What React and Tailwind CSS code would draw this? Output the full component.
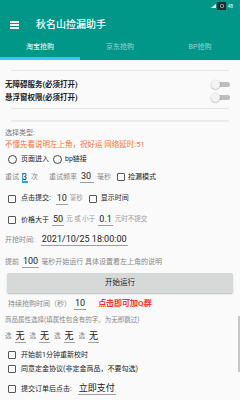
import React from "react";

const font = { fontFamily: 'Roboto, "Noto Sans CJK SC", sans-serif' };

function Cb() {
  return <span className="inline-block w-[8px] h-[8px] border border-[#555] rounded-[1px] shrink-0" />;
}
function Radio() {
  return <span className="inline-block w-[9px] h-[9px] border border-[#444] rounded-full shrink-0" />;
}
function Val({ children, cls = "" }) {
  return (
    <span className={"inline-block text-[9px] text-[#222] leading-[11px] border-b border-[#9e9e9e] px-[1px] " + cls}>
      {children}
    </span>
  );
}
function Switch() {
  return (
    <span className="relative inline-flex items-center w-[19px] h-[10px]">
      <span className="absolute left-[4px] right-0 h-[5px] rounded-full bg-[#bdbdbd]" />
      <span className="absolute left-0 w-[9px] h-[9px] rounded-full bg-[#f3f3f3] shadow-[0_0.5px_1.5px_rgba(0,0,0,0.35)]" />
    </span>
  );
}

export default function App() {
  return (
    <div className="relative w-[240px] h-[400px] overflow-hidden bg-[#fafafa]" style={font}>
      <div className="flex flex-col">
        {/* header */}
        <div className="bg-[#009688] flex flex-col">
          <div className="h-[12px] flex items-center justify-end pr-[7px] gap-[1px]">
            <span className="w-0 h-0 border-l-[5px] border-l-transparent border-b-[4px] border-b-white" />
            <span className="w-[9px] h-[8px] bg-[#1e2b2a] flex items-center justify-center">
              <span className="w-[4px] h-[4px] border border-[#8a9a98] rounded-[1px]" />
            </span>
            <span className="text-[5px] text-white leading-none">48</span>
          </div>
          <div className="h-[26px] flex items-center">
            <div className="ml-[10px] w-[9px] flex flex-col gap-[1.5px]">
              <span className="h-[1.5px] bg-white" />
              <span className="h-[1.5px] bg-white" />
              <span className="h-[1.5px] bg-white" />
            </div>
            <span className="ml-[17px] text-white text-[10px] font-medium leading-none">秋名山捡漏助手</span>
          </div>
          <div className="h-[22px] flex">
            <div className="flex-1 flex flex-col">
              <div className="flex-1 flex items-center justify-center text-[7px] text-white">淘宝抢购</div>
              <div className="h-[3px] bg-[#40c4ff]" />
            </div>
            <div className="flex-1 flex items-center justify-center text-[7px] text-white/60 pb-[3px]">京东抢购</div>
            <div className="flex-1 flex items-center justify-center text-[7px] text-white/60 pb-[3px]">BP抢购</div>
          </div>
        </div>

        {/* content */}
        <div className="mx-[11px] mt-[10px] h-px bg-[#e6e6e6]" />
        <div className="mt-[7px] flex flex-col">
          <div className="h-[13px] flex items-center justify-between pl-[5px] pr-[10px]">
            <span className="text-[7.5px] font-bold text-[#222]">无障碍服务(必须打开)</span>
            <Switch />
          </div>
          <div className="h-[13px] flex items-center justify-between pl-[5px] pr-[10px]">
            <span className="text-[7.5px] font-bold text-[#222]">悬浮窗权限(必须打开)</span>
            <Switch />
          </div>
        </div>
        <div className="mx-[11px] mt-[4px] h-px bg-[#e6e6e6]" />
        <div className="mx-[11px] mt-[11px] h-[2px] bg-[#ececec]" />

        <div className="mt-[5px] h-[12px] flex items-center px-[5px] text-[7px] text-[#777]">选择类型:</div>
        <div className="h-[11px] flex items-center px-[5px] text-[7.5px] text-[#ff6e40]">不懂先看说明左上角，祝好运 网络延时:51</div>

        <div className="h-[18px] flex items-center pl-[8px] text-[7px] text-[#222]">
          <Radio />
          <span className="ml-[4px]">页面进入</span>
          <span className="ml-[4px] flex"><Radio /></span>
          <span className="ml-[3px]">bp链接</span>
        </div>

        <div className="h-[18px] flex items-center pl-[5px] text-[7px] text-[#888]">
          <span>重试</span>
          <span className="relative ml-[3px] inline-block w-[6px] h-[11px] border-b-2 border-[#29a3e8]">
            <span className="absolute left-0 top-0 text-[9px] leading-[11px] text-[#222]">3</span>
            <span className="absolute left-0 top-[1px] w-px h-[9px] bg-[#29a3e8]" />
          </span>
          <span className="ml-[3px]">次</span>
          <span className="ml-[11px]">重试频率</span>
          <Val cls="ml-[3px] w-[14px]">30</Val>
          <span className="ml-[3px]">毫秒</span>
          <span className="ml-[6px] flex"><Cb /></span>
          <span className="ml-[3px] text-[#222]">捡漏模式</span>
        </div>

        <div className="h-[25px] flex items-center pl-[8px] text-[7px] text-[#222]">
          <Cb />
          <span className="ml-[5px]">点击提交:</span>
          <Val cls="ml-[5px]">10</Val>
          <span className="ml-[2px] text-[6.5px] text-[#999]">毫秒</span>
          <span className="ml-[6px] flex"><Cb /></span>
          <span className="ml-[4px]">显示时间</span>
        </div>

        <div className="h-[18px] flex items-center pl-[8px] text-[7px] text-[#222]">
          <Cb />
          <span className="ml-[5px]">价格大于</span>
          <Val cls="ml-[3px]">50</Val>
          <span className="ml-[2px] text-[6.5px] text-[#999]">元 或 小于</span>
          <Val cls="ml-[3px]">0.1</Val>
          <span className="ml-[2px] text-[6.5px] text-[#999]">元时不提交</span>
        </div>

        <div className="h-[22px] flex items-center pl-[5px] text-[7px] text-[#888]">
          <span>开抢时间:</span>
          <Val cls="ml-[6px]">2021/10/25 18:00:00</Val>
        </div>

        <div className="h-[22px] flex items-center pl-[5px] text-[7px] text-[#888]">
          <span>提前</span>
          <Val cls="ml-[3px]">100</Val>
          <span className="ml-[2px]">毫秒开始运行 具体设置看左上角的说明</span>
        </div>

        <div className="mx-[7px] h-[20px] rounded-[2px] bg-[#d7d8d8] shadow-[0_1px_1.5px_rgba(0,0,0,0.25)] flex items-center justify-center text-[7.5px] text-[#222]">
          开始运行
        </div>

        <div className="h-[22px] flex items-center pl-[8px] text-[7px] text-[#888]">
          <span>持续抢购时间（秒）</span>
          <Val cls="ml-[3px]">10</Val>
          <span className="ml-[12px] text-[8px] font-bold text-[#ff3030]">点击即可加Q群</span>
        </div>

        <div className="h-[11px] flex items-center pl-[5px] text-[6.5px] text-[#888]">商品属性选择(填属性包含有的字。为无即跳过)</div>

        <div className="h-[22px] flex items-center pl-[5px] text-[6.5px] text-[#888]">
          <span>选</span>
          <Val cls="ml-[3px]">无</Val>
          <span className="ml-[4px]">选</span>
          <Val cls="ml-[3px]">无</Val>
          <span className="ml-[4px]">选</span>
          <Val cls="ml-[3px]">无</Val>
          <span className="ml-[4px]">选</span>
          <Val cls="ml-[3px]">无</Val>
        </div>

        <div className="h-[14px] flex items-center pl-[8px] text-[7px] text-[#222]">
          <Cb />
          <span className="ml-[5px]">开始前1分钟重新校时</span>
        </div>
        <div className="h-[14px] flex items-center pl-[8px] text-[7px] text-[#222]">
          <Cb />
          <span className="ml-[5px]">同意定金协议(非定金商品，不要勾选)</span>
        </div>
        <div className="mt-[3px] h-[20px] flex items-center pl-[8px] text-[7px] text-[#222]">
          <Cb />
          <span className="ml-[5px]">提交订单后点击:</span>
          <Val cls="ml-[6px]">立即支付</Val>
        </div>
        <div className="h-[11px] pl-[5px] pt-[1px] text-[7.5px] text-[#ff6e6e] whitespace-nowrap">说明：抢购前请先打开淘宝进入商品页面，到时间自动点击购买</div>
      </div>

      {/* scrollbar thumb overlay */}
      <div className="absolute right-0 top-[316px] w-[2px] h-[56px] bg-[#c8c8c8]" />
    </div>
  );
}
